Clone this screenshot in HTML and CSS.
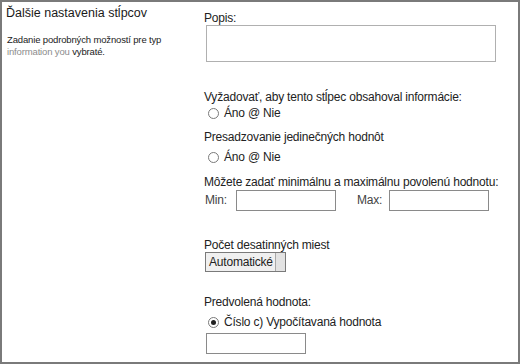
FILE: index.html
```html
<!DOCTYPE html>
<html lang="sk">
<head>
  <meta charset="UTF-8">
  <title>Ďalšie nastavenia stĺpcov</title>
  <link rel="stylesheet" href="styles.css">
</head>
<body>
  <div class="frame">
    <div class="side">
      <h3 class="side-title">Ďalšie nastavenia stĺpcov</h3>
      <p class="side-desc">
        Zadanie podrobných možností pre typ<br>
        <span class="muted">information you</span> vybraté.
      </p>
    </div>

    <div class="main">
      <label class="lbl" for="popis">Popis:</label>
      <textarea id="popis" class="desc-box"></textarea>

      <div class="lbl gap-lg">Vyžadovať, aby tento stĺpec obsahoval informácie:</div>
      <div class="radio-row"><span class="radio"></span>Áno @ Nie</div>

      <div class="lbl gap-sm">Presadzovanie jedinečných hodnôt</div>
      <div class="radio-row r2"><span class="radio"></span>Áno @ Nie</div>

      <div class="lbl gap-md">Môžete zadať minimálnu a maximálnu povolenú hodnotu:</div>
      <div class="minmax">
        <span class="mm-label">Min:</span>
        <input type="text" class="box">
        <span class="mm-label max">Max:</span>
        <input type="text" class="box">
      </div>

      <div class="lbl gap-xl">Počet desatinných miest</div>
      <div class="select"><span>Automatické</span></div>

      <div class="lbl gap-xl2">Predvolená hodnota:</div>
      <div class="radio-row r3"><span class="radio checked"></span>Číslo c) Vypočítavaná hodnota</div>
      <input type="text" class="box default-box">
    </div>
  </div>
</body>
</html>
```

FILE: styles.css
```css
body {
  margin: 0;
  font-family: 'Liberation Sans', Arial, sans-serif;
  color: #222;
  background: #fff;
}
.frame {
  width: 520px;
  height: 364px;
  box-sizing: border-box;
  border: 2px solid #7a7a7a;
  display: flex;
}
.side {
  width: 198px;
  box-sizing: border-box;
  padding: 4px 0 0 4px;
}
.side-title {
  margin: 0;
  font-size: 12.5px;
  font-weight: normal;
  line-height: 14px;
  color: #1a1a1a;
}
.side-desc {
  margin: 14px 0 0 1px;
  font-size: 9.5px;
  letter-spacing: -0.15px;
  line-height: 12px;
  color: #222;
}
.muted {
  color: #8c8c8c;
}
.main {
  flex: 1;
  padding: 8px 0 0 4px;
  font-size: 12px;
  letter-spacing: -0.2px;
}
.lbl {
  display: block;
  line-height: 16px;
}
.desc-box {
  display: block;
  margin: -1px 0 0 2px;
  width: 290px;
  height: 37px;
  box-sizing: border-box;
  border: 1px solid #b0b0b0;
  resize: none;
}
.gap-lg { margin-top: 27px; }
.gap-sm { margin-top: 8px; }
.gap-md { margin-top: 9px; }
.gap-xl { margin-top: 26px; }
.gap-xl2 { margin-top: 22px; }
.radio-row {
  display: flex;
  align-items: center;
  height: 16px;
  padding-left: 4px;
}
.r2 { margin-top: 4px; }
.r3 { margin-top: 4px; }
.radio {
  width: 11px;
  height: 11px;
  box-sizing: border-box;
  border: 1px solid #7a7a7a;
  border-radius: 50%;
  margin-right: 5px;
  display: flex;
  align-items: center;
  justify-content: center;
}
.radio.checked::after {
  content: "";
  width: 5px;
  height: 5px;
  border-radius: 50%;
  background: #222;
}
.minmax {
  display: flex;
  align-items: center;
  margin-top: -1px;
  height: 22px;
}
.mm-label {
  color: #444;
  width: 31px;
  padding-left: 1px;
}
.mm-label.max {
  width: 32px;
  margin-left: 20px;
}
.box {
  width: 100px;
  height: 21px;
  box-sizing: border-box;
  border: 1px solid #8a8a8a;
  margin: 0;
}
.select {
  margin: -1px 0 0 1px;
  width: 81px;
  height: 20px;
  box-sizing: border-box;
  border: 1px solid #7a7a7a;
  background: #f0f0f0;
  position: relative;
  line-height: 18px;
}
.select::after {
  content: "";
  position: absolute;
  right: 0;
  top: 0;
  width: 9px;
  height: 18px;
  background: #e3e3e3;
  border-left: 1px solid #a8a8a8;
}
.select span {
  position: relative;
  z-index: 1;
  padding-left: 3px;
}
.default-box {
  display: block;
  margin: 3px 0 0 2px;
}
```
